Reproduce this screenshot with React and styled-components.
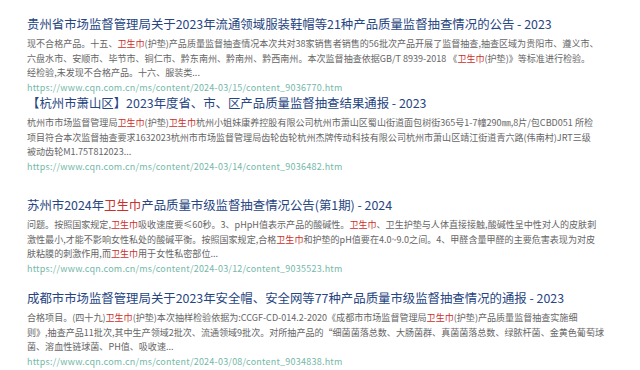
import styled, { createGlobalStyle } from "styled-components";

const KEYWORD = "卫生巾";

const results = [
    {
        space: 0,
        title: "贵州省市场监督管理局关于2023年流通领域服装鞋帽等21种产品质量监督抽查情况的公告 - 2023",
        lines: [
            "现不合格产品。十五、卫生巾(护垫)产品质量监督抽查情况本次共对38家销售者销售的56批次产品开展了监督抽查,抽查区域为贵阳市、遵义市、",
            "六盘水市、安顺市、毕节市、铜仁市、黔东南州、黔南州、黔西南州。本次监督抽查依据GB/T 8939-2018 《卫生巾(护垫)》等标准进行检验。",
            "经检验,未发现不合格产品。十六、服装类...",
        ],
        url: "https://www.cqn.com.cn/ms/content/2024-03/15/content_9036770.htm",
    },
    {
        space: 0,
        title: "【杭州市萧山区】2023年度省、市、区产品质量监督抽查结果通报 - 2023",
        lines: [
            "杭州市市场监督管理局卫生巾(护垫)卫生巾杭州小姐妹康养控股有限公司杭州市萧山区蜀山街道面包树街365号1-7幢290㎜,8片/包CBD051 所检",
            "项目符合本次监督抽查要求1632023杭州市市场监督管理局齿轮齿轮杭州杰牌传动科技有限公司杭州市萧山区靖江街道青六路(伟南村)JRT三级",
            "被动齿轮M1.75T812023...",
        ],
        url: "https://www.cqn.com.cn/ms/content/2024-03/14/content_9036482.htm",
    },
    {
        space: 23,
        title: "苏州市2024年卫生巾产品质量市级监督抽查情况公告(第1期) - 2024",
        lines: [
            "问题。按照国家规定,卫生巾吸收速度要≤60秒。3、pHpH值表示产品的酸碱性。卫生巾、卫生护垫与人体直接接触,酸碱性呈中性对人的皮肤刺",
            "激性最小,才能不影响女性私处的酸碱平衡。按照国家规定,合格卫生巾和护垫的pH值要在4.0~9.0之间。4、甲醛含量甲醛的主要危害表现为对皮",
            "肤粘膜的刺激作用,而卫生巾用于女性私密部位...",
        ],
        url: "https://www.cqn.com.cn/ms/content/2024-03/12/content_9035523.htm",
    },
    {
        space: 14,
        title: "成都市市场监督管理局关于2023年安全帽、安全网等77种产品质量市级监督抽查情况的通报 - 2023",
        lines: [
            "合格项目。(四十九)卫生巾(护垫)本次抽样检验依据为:CCGF-CD-014.2-2020《成都市市场监督管理局卫生巾(护垫)产品质量监督抽查实施细",
            "则》,抽查产品11批次,其中生产领域2批次、流通领域9批次。对所抽产品的“细菌菌落总数、大肠菌群、真菌菌落总数、绿脓杆菌、金黄色葡萄球",
            "菌、溶血性链球菌、PH值、吸收速...",
        ],
        url: "https://www.cqn.com.cn/ms/content/2024-03/08/content_9034838.htm",
    },
];

// split text on the keyword and mark every hit in red
const highlight = (text) => {
    const parts = text.split(KEYWORD);
    return parts.map((part, i) => (
        <span key={i}>
            {part}
            {i < parts.length - 1 && <Hit>{KEYWORD}</Hit>}
        </span>
    ));
};

const App = () => {
    return (
        <>
            <GlobalStyle />
            <List>
                {results.map((item) => (
                    <Result key={item.url} $space={item.space}>
                        <Title href="#">{highlight(item.title)}</Title>
                        <Snippet>
                            {item.lines.map((line, i) => (
                                <Line key={i}>{highlight(line)}</Line>
                            ))}
                        </Snippet>
                        <Url>{item.url}</Url>
                    </Result>
                ))}
            </List>
        </>
    );
};

const GlobalStyle = createGlobalStyle`
    html, body {
        margin: 0;
        padding: 0;
        background: #ffffff;
    }
    body {
        font-family: "Noto Sans CJK SC", "Noto Sans", sans-serif;
    }
`;

const List = styled.ul`
    display: flex;
    flex-direction: column;
    margin: 0;
    padding: 16px 0 0 27px;
    list-style: none;
`;

const Result = styled.li`
    display: flex;
    flex-direction: column;
    margin-top: ${({ $space }) => $space}px;
`;

const Title = styled.a`
    display: block;
    font-size: 12.4px;
    line-height: 16px;
    color: #27457f;
    text-decoration: none;
    white-space: nowrap;
`;

const Snippet = styled.div`
    margin-top: 5px;
    font-size: 9.05px;
    line-height: 14.5px;
    color: #666666;
`;

const Line = styled.div`
    white-space: nowrap;
`;

const Hit = styled.em`
    font-style: normal;
    color: #c9302c;
`;

const Url = styled.div`
    font-size: 9px;
    line-height: 14.5px;
    letter-spacing: 0.23px;
    color: #74b8a8;
    white-space: nowrap;
`;

export default App;
